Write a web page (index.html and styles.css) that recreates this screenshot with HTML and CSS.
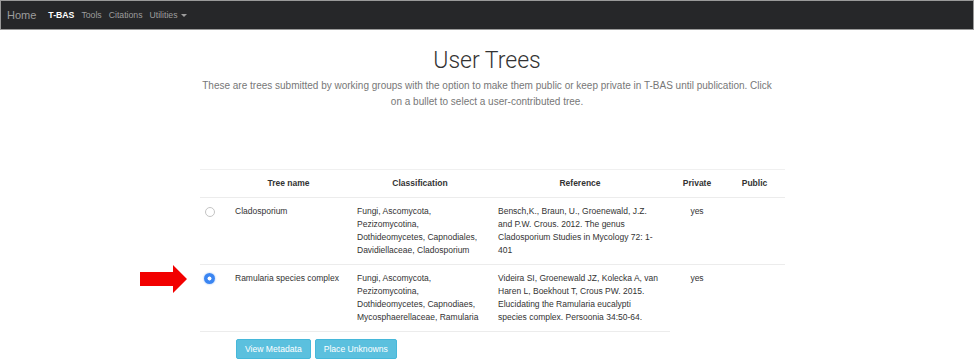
FILE: index.html
```html
<!DOCTYPE html>
<html lang="en">

<head>
    <meta charset="UTF-8">
    <meta name="viewport" content="width=device-width, initial-scale=1.0">
    <title>User Trees</title>
    <link rel="stylesheet" href="styles.css">
</head>

<body>

    <!-- Top navigation -->
    <nav class="navbar">
        <a class="brand" href="#">Home</a>
        <a class="nav-link active" href="#">T-BAS</a>
        <a class="nav-link" href="#">Tools</a>
        <a class="nav-link" href="#">Citations</a>
        <a class="nav-link" href="#">Utilities <span class="caret"></span></a>
    </nav>

    <!-- Page header -->
    <div class="page-header">
        <h1>User Trees</h1>
        <p class="lead">These are trees submitted by working groups with the option to make them public or keep private in T-BAS until publication. Click on a bullet to select a user-contributed tree.</p>
    </div>

    <!-- Trees table -->
    <div class="tree-list">
        <table class="tree-table">
            <colgroup>
                <col class="c-radio">
                <col class="c-name">
                <col class="c-class">
                <col class="c-ref">
                <col class="c-priv">
                <col class="c-pub">
            </colgroup>
            <thead>
                <tr>
                    <th></th>
                    <th>Tree name</th>
                    <th>Classification</th>
                    <th>Reference</th>
                    <th>Private</th>
                    <th>Public</th>
                </tr>
            </thead>
            <tbody>
                <tr>
                    <td><span class="radio"></span></td>
                    <td class="name">Cladosporium</td>
                    <td>Fungi, Ascomycota, Pezizomycotina, Dothideomycetes, Capnodiales, Davidiellaceae, Cladosporium</td>
                    <td>Bensch,K., Braun, U., Groenewald, J.Z. and P.W. Crous. 2012. The genus Cladosporium Studies in Mycology 72: 1-401</td>
                    <td class="flag">yes</td>
                    <td class="flag"></td>
                </tr>
                <tr class="last">
                    <td class="pick">
                        <!-- annotation arrow -->
                        <svg class="arrow" width="48" height="28" viewBox="0 0 48 28">
                            <polygon points="0,7 33,7 33,0 47,14 33,28 33,21 0,21" fill="#f20000" />
                        </svg>
                        <span class="radio checked"></span>
                    </td>
                    <td class="name">Ramularia species complex</td>
                    <td>Fungi, Ascomycota, Pezizomycotina, Dothideomycetes, Capnodiaes, Mycosphaerellaceae, Ramularia</td>
                    <td>Videira SI, Groenewald JZ, Kolecka A, van Haren L, Boekhout T, Crous PW. 2015. Elucidating the Ramularia eucalypti <span class="keep">species complex.</span> Persoonia 34:50-64.</td>
                    <td class="flag">yes</td>
                    <td class="flag"></td>
                </tr>
            </tbody>
        </table>

        <div class="actions">
            <button type="button" class="btn">View Metadata</button>
            <button type="button" class="btn">Place Unknowns</button>
        </div>
    </div>

</body>

</html>
```

FILE: styles.css
```css
/* General Styles */
html,
body {
    margin: 0;
    background-color: #ffffff;
    font-family: "Liberation Sans", Arial, sans-serif;
    color: #333;
}

/* Navbar */
.navbar {
    display: flex;
    align-items: center;
    height: 28px;
    background-color: #262729;
    border: 1px solid #9a9a9a;
    padding: 0 6px;
}

.navbar a,
.navbar a:visited {
    text-decoration: none;
    color: #9d9d9d;
}

.brand {
    font-size: 11px;
    margin-right: 12px;
}

.nav-link {
    font-size: 8.7px;
    margin-right: 7px;
}

.navbar .nav-link.active {
    color: #ffffff;
    font-weight: bold;
}

.caret {
    display: inline-block;
    width: 0;
    height: 0;
    border-top: 3px solid #9d9d9d;
    border-left: 3px solid transparent;
    border-right: 3px solid transparent;
    vertical-align: middle;
    margin-left: 1px;
}

/* Header */
.page-header {
    width: 578px;
    margin: 0 auto;
    text-align: center;
}

h1 {
    font-family: Roboto, "Liberation Sans", sans-serif;
    font-weight: 300;
    font-size: 23px;
    line-height: 30px;
    margin: 16px 0 0;
    color: #333;
}

.lead {
    font-size: 10px;
    line-height: 16px;
    color: #777;
    margin: 2px 0 0;
}

/* Table */
.tree-list {
    width: 585px;
    margin: 59px 0 0 200px;
}

.tree-table {
    width: 585px;
    table-layout: fixed;
    border-collapse: collapse;
    font-size: 8.5px;
    line-height: 13px;
    color: #333;
}

.c-radio { width: 28px; }
.c-name { width: 122px; }
.c-class { width: 141px; }
.c-ref { width: 179px; }
.c-priv { width: 55px; }
.c-pub { width: 60px; }

.tree-table th,
.tree-table td {
    padding: 7px 8px 7px 7px;
    text-align: left;
    vertical-align: top;
    border-bottom: 1px solid #ececec;
}

.tree-table thead th {
    border-top: 1px solid #f0f0f0;
    text-align: center;
    font-weight: bold;
}

.tree-table td.flag {
    text-align: center;
}

.tree-table tr.last td.flag {
    border-bottom: none;
}

.tree-table td.name,
.keep {
    white-space: nowrap;
}

.tree-table td.pick {
    position: relative;
}

.arrow {
    position: absolute;
    left: -60px;
    top: 0;
}

/* Radio bullets */
.radio {
    display: block;
    width: 8px;
    height: 8px;
    margin: 2px 0 0 -2px;
    border: 1px solid #c4c4c4;
    border-radius: 50%;
    background: #fff;
}

.radio.checked {
    width: 11px;
    height: 11px;
    margin: 1px 0 0 -3px;
    border: none;
    background: radial-gradient(circle, #ffffff 0 1.7px, #3a85f2 2.3px);
    box-shadow: 0 0 2px rgba(58, 133, 242, 0.6);
}

/* Buttons */
.actions {
    display: flex;
    gap: 4px;
    margin: 7px 0 0 36px;
}

.btn {
    background-color: #5bc0de;
    color: white;
    font-family: "Liberation Sans", Arial, sans-serif;
    font-size: 8.6px;
    height: 20px;
    padding: 0 8px;
    border: 1px solid #46b8da;
    border-radius: 2px;
    cursor: pointer;
}
```
